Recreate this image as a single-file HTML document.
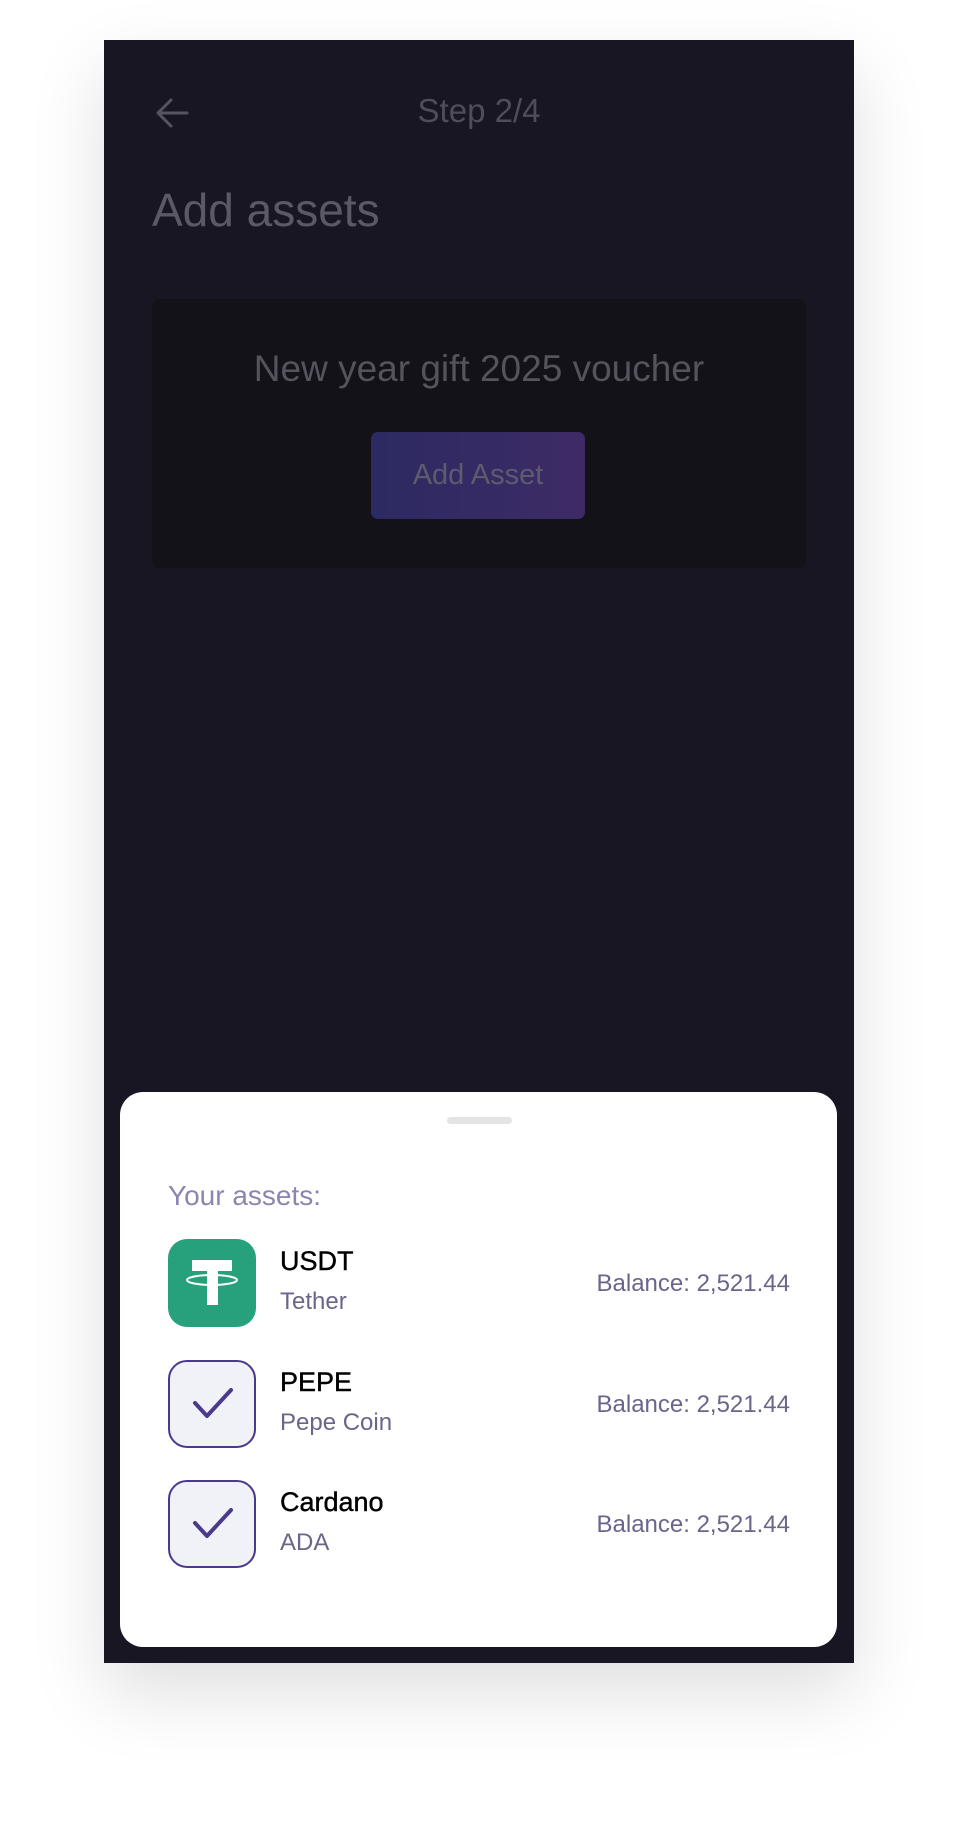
<!DOCTYPE html>
<html><head><meta charset="utf-8"><style>
*{margin:0;padding:0;box-sizing:border-box}
body{width:958px;height:1832px;background:#fff;font-family:"Liberation Sans",sans-serif;position:relative;overflow:hidden}
.frame{position:absolute;left:104px;top:40px;width:750px;height:1623px;background:#171622;box-shadow:0 30px 70px rgba(0,0,0,0.13)}
.abs{position:absolute}
.step{left:0;width:750px;top:51px;text-align:center;font-size:33px;color:#4e4d59;line-height:40px}
.title{left:48px;top:144px;font-size:46px;color:#5a5964;line-height:52px}
.card{left:48px;top:259px;width:654px;height:269px;background:#131219;border-radius:8px}
.vt{left:0;width:654px;top:48px;text-align:center;font-size:37px;color:#55545e;line-height:44px}
.btn{left:219px;top:133px;width:214px;height:87px;border-radius:7px;background:linear-gradient(90deg,#2c2a62,#3e2b66);color:#5e5c6c;font-size:29px;text-align:center;line-height:87px}
.sheet{position:absolute;left:120px;top:1092px;width:717px;height:555px;background:#fff;border-radius:23px}
.handle{left:327px;top:25px;width:65px;height:7px;border-radius:4px;background:#e4e4e6}
.ya{left:48px;top:87px;font-size:28px;color:#8d85b0;line-height:34px}
.icon{left:48px;width:88px;height:88px;border-radius:19px}
.chk{background:#f1f2f7;border:2px solid #4b3a8c}
.name{left:160px;font-size:27px;color:#000;line-height:32px;-webkit-text-stroke:0.4px #000}
.sub{left:160px;font-size:24px;color:#6b6589;line-height:30px}
.bal{right:47px;font-size:24px;color:#6b6589;line-height:30px}
</style></head><body>
<div class="frame">
  <svg class="abs" style="left:51px;top:57px" width="34" height="32" viewBox="0 0 34 32"><path d="M32 16H3M16 3L3 16l13 13" fill="none" stroke="#55545f" stroke-width="3" stroke-linecap="round" stroke-linejoin="round"/></svg>
  <div class="abs step">Step 2/4</div>
  <div class="abs title">Add assets</div>
  <div class="abs card">
    <div class="abs vt">New year gift 2025 voucher</div>
    <div class="abs btn">Add Asset</div>
  </div>
</div>
<div class="sheet">
  <div class="abs handle"></div>
  <div class="abs ya">Your assets:</div>

  <div class="abs icon" style="top:147px;background:#27a17b">
    <svg width="88" height="88" viewBox="0 0 88 88"><rect x="24" y="21" width="40" height="11" fill="#fff"/><rect x="39" y="21" width="11" height="45" fill="#fff"/><ellipse cx="44" cy="41" rx="25" ry="5" fill="none" stroke="#fff" stroke-width="2"/></svg>
  </div>
  <div class="abs name" style="top:153px">USDT</div>
  <div class="abs sub" style="top:195px">Tether</div>
  <div class="abs bal" style="top:177px">Balance: 2,521.44</div>

  <div class="abs icon chk" style="top:268px">
    <svg width="84" height="84" viewBox="0 0 84 84"><path d="M25 41l12 13 24-26" fill="none" stroke="#4b3a8c" stroke-width="4" stroke-linecap="round" stroke-linejoin="round"/></svg>
  </div>
  <div class="abs name" style="top:274px">PEPE</div>
  <div class="abs sub" style="top:316px">Pepe Coin</div>
  <div class="abs bal" style="top:298px">Balance: 2,521.44</div>

  <div class="abs icon chk" style="top:388px">
    <svg width="84" height="84" viewBox="0 0 84 84"><path d="M25 41l12 13 24-26" fill="none" stroke="#4b3a8c" stroke-width="4" stroke-linecap="round" stroke-linejoin="round"/></svg>
  </div>
  <div class="abs name" style="top:394px">Cardano</div>
  <div class="abs sub" style="top:436px">ADA</div>
  <div class="abs bal" style="top:418px">Balance: 2,521.44</div>
</div>
</body></html>
